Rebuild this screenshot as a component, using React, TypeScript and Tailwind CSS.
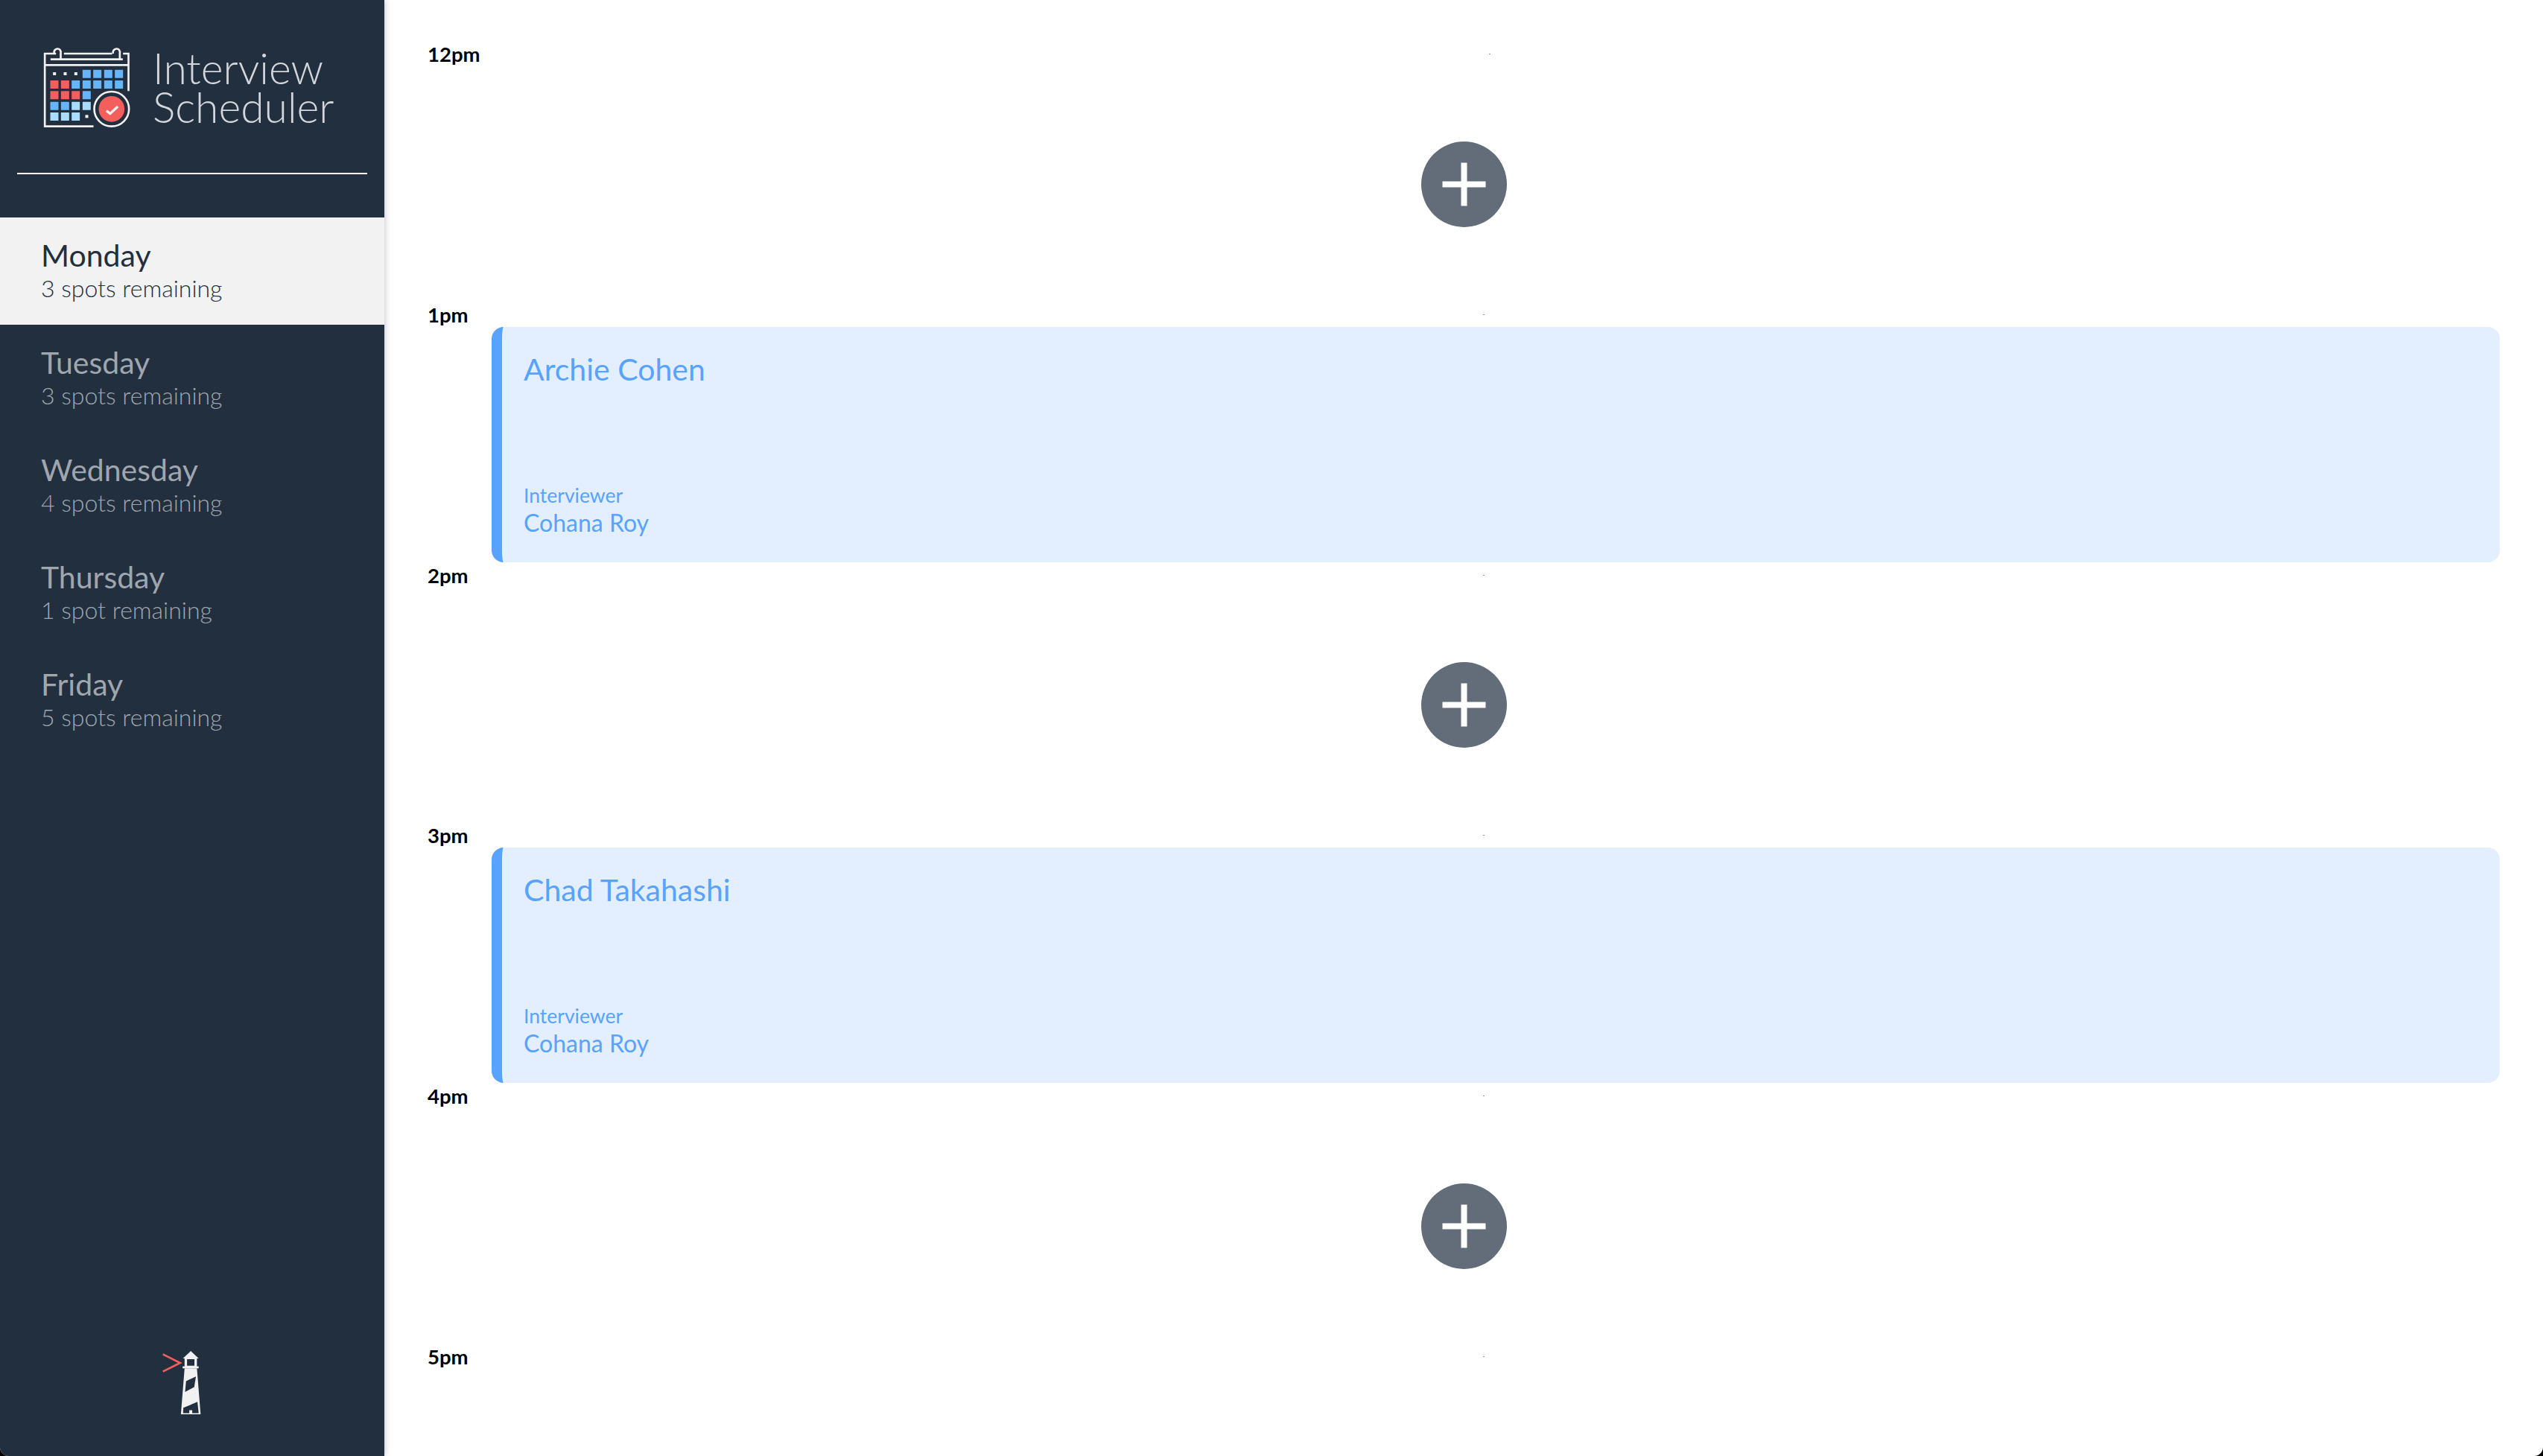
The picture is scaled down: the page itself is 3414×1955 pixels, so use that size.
const days = [
  { name: "Monday", spots: "3 spots remaining", active: true },
  { name: "Tuesday", spots: "3 spots remaining" },
  { name: "Wednesday", spots: "4 spots remaining" },
  { name: "Thursday", spots: "1 spot remaining" },
  { name: "Friday", spots: "5 spots remaining" },
];

const slots: { time: string; student?: string | null; last?: boolean }[] = [
  { time: "12pm" },
  { time: "1pm", student: "Archie Cohen" },
  { time: "2pm" },
  { time: "3pm", student: "Chad Takahashi" },
  { time: "4pm" },
  { time: "5pm", last: true },
];

function CalendarLogo() {
  const cols = [113, 156, 199, 243, 286, 330, 373];
  const rows = [160, 203, 246, 289, 332];
  const B = "#66b5fb";
  const L = "#a8dcfa";
  const R = "#f25f5c";
  const cells: [number, number, string][] = [
    [3, 0, B], [4, 0, B], [5, 0, B], [6, 0, B],
    [0, 1, R], [1, 1, R], [2, 1, B], [3, 1, B], [4, 1, B], [5, 1, B], [6, 1, B],
    [0, 2, R], [1, 2, R], [2, 2, R], [3, 2, B],
    [0, 3, B], [1, 3, B], [2, 3, L], [3, 3, L],
    [0, 4, L], [1, 4, L], [2, 4, L],
  ];
  return (
    <svg viewBox="85 68 350 327" className="w-[117px] h-[109px] shrink-0" fill="none">
      <g stroke="#f1f1f1" strokeWidth="8">
        <path d="M136 95H91V388H287" />
        <path d="M168 95H362" />
        <path d="M406 95H428V246" />
        <path d="M91 141H428" />
        <path d="M114 118H405" />
        <path d="M129 95C122 72 160 66 155 95V118" />
        <path d="M366 95C360 72 398 66 393 95V118" />
      </g>
      {cells.map(([c, r, f]) => (
        <rect key={`${c}-${r}`} x={cols[c]} y={rows[r]} width="33" height="33" rx="1" fill={f} />
      ))}
      {[[130, 176], [173, 176], [216, 176], [260, 348]].map(([x, y]) => (
        <rect key={`${x}`} x={x - 6} y={y - 6} width="12" height="12" fill="#f1f1f1" />
      ))}
      <circle cx="360" cy="318" r="70" stroke="#f1f1f1" strokeWidth="8" />
      <circle cx="360" cy="318" r="52" fill={R} />
      <path d="M339 325L354 337L385 308" stroke="#f1f1f1" strokeWidth="10" />
    </svg>
  );
}

function Lighthouse() {
  return (
    <svg viewBox="110 100 160 260" className="w-[53px] h-[87px]" fill="none">
      <path d="M115 115L185 150L115 185" stroke="#f25f5c" strokeWidth="8" />
      <path d="M196 132L228 102L260 132Z" fill="#f1f1f1" />
      <path d="M203 130H253V168H203Z M213 135V161H243V135Z" fill="#f1f1f1" fillRule="evenodd" />
      <rect x="195" y="164" width="65" height="8" fill="#f1f1f1" />
      <path d="M203 172H253L268 358H188Z" fill="#f1f1f1" />
      <path d="M209 224L249 205L242 248L205 268Z" fill="#222f3e" />
      <path d="M198 332L255 308L260 354H234V342H222V354H197Z" fill="#222f3e" />
    </svg>
  );
}

function Appointment({ student }: { student: string }) {
  return (
    <div className="ml-[86px] h-[316px] flex flex-col rounded-[16px] border-l-[14px] border-[#57a3ff] bg-[#e3effe] pl-[29px] text-[#57a3ff]">
      <h2 className="mt-[32px] text-[41px] leading-[50px] font-normal">{student}</h2>
      <div className="mt-auto pb-[34px]">
        <p className="text-[26.5px] leading-[36px] font-normal">Interviewer</p>
        <p className="text-[32px] leading-[38px] font-normal">Cohana Roy</p>
      </div>
    </div>
  );
}

function AddButton() {
  return (
    <div className="h-full flex items-center justify-center">
      <div className="w-[115px] h-[115px] rounded-full bg-[#636d79]">
        <svg viewBox="0 0 115 115" className="w-full h-full" fill="none">
          <path d="M57.5 28.5V86.5M28.5 57.5H86.5" stroke="#ffffff" strokeWidth="8" />
        </svg>
      </div>
    </div>
  );
}

export default function App() {
  return (
    <div className="h-[1955px] bg-black font-['Lato','Noto_Sans',sans-serif]">
      <div className="h-full flex overflow-hidden rounded-b-[12px] bg-white">
        <nav className="relative z-10 w-[516px] shrink-0 flex flex-col bg-[#222f3e] shadow-[0_0_8px_rgba(50,50,93,0.35)]">
          <div className="mx-[23px] h-[234px] border-b-2 border-white pl-[35px] pt-[63px]">
            <div className="flex items-start gap-[30px]">
              <CalendarLogo />
              <div className="pt-[2px] text-[57px] leading-[52px] font-light text-[#d3d6da] whitespace-nowrap">
                <div>Interview</div>
                <div>Scheduler</div>
              </div>
            </div>
          </div>
          <ul className="mt-[58px]">
            {days.map((d) => (
              <li
                key={d.name}
                className={`h-[144px] pl-[55px] pt-[26px] ${d.active ? "bg-[#f2f2f2] text-[#222f3e]" : "text-[#a0a6ae]"}`}
              >
                <div className="text-[41px] leading-[50px] font-normal">{d.name}</div>
                <div className="-mt-[1px] text-[32px] leading-[40px] font-light">{d.spots}</div>
              </li>
            ))}
          </ul>
          <div className="mt-auto flex justify-center pr-[30px] pb-[55px]">
            <Lighthouse />
          </div>
        </nav>
        <main className="flex-1 min-w-0 pt-[56px] pl-[58px] pr-[58px] text-black">
          {slots.map((s) => (
            <section key={s.time} className="h-[349.75px]">
              <div className="h-[33px] flex items-center">
                <span className="text-[27.5px] leading-[33px] font-bold">{s.time}</span>
                <span className="flex-1 flex justify-center">
                  <span className="w-[2px] h-[1px] bg-[#999999]" />
                </span>
              </div>
              {!s.last && (
                <div className="h-[316.75px]">
                  {s.student ? <Appointment student={s.student} /> : <AddButton />}
                </div>
              )}
            </section>
          ))}
        </main>
      </div>
    </div>
  );
}
